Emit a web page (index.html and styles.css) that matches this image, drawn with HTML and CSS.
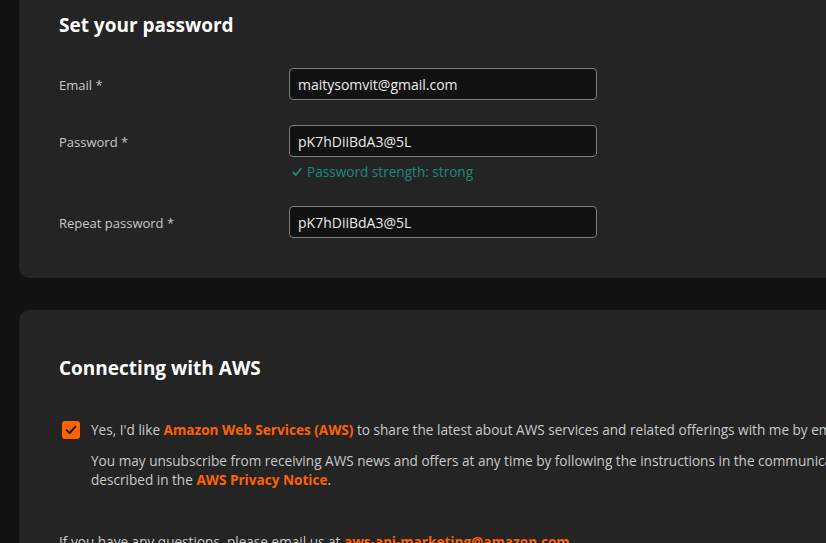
FILE: index.html
```html
<!DOCTYPE html>
<html lang="en">
<head>
<meta charset="utf-8">
<title>Set your password</title>
<link rel="stylesheet" href="styles.css">
</head>
<body>
<main class="page">
  <section class="card card-password">
    <h2 class="card-title">Set your password</h2>
    <div class="form-row">
      <label class="field-label" for="email">Email *</label>
      <div class="field">
        <input class="input" id="email" type="text" value="maitysomvit@gmail.com">
      </div>
    </div>
    <div class="form-row">
      <label class="field-label" for="pw">Password *</label>
      <div class="field">
        <input class="input" id="pw" type="text" value="pK7hDiiBdA3@5L">
        <div class="strength"><svg class="check" width="10" height="10" viewBox="0 0 10 10"><path d="M1.2 5.4 L3.8 8 L8.8 1.8" fill="none" stroke="currentColor" stroke-width="1.8" stroke-linecap="round" stroke-linejoin="round"/></svg><span>Password strength: strong</span></div>
      </div>
    </div>
    <div class="form-row">
      <label class="field-label" for="pw2">Repeat password *</label>
      <div class="field">
        <input class="input" id="pw2" type="text" value="pK7hDiiBdA3@5L">
      </div>
    </div>
  </section>

  <section class="card card-aws">
    <h2 class="card-title">Connecting with AWS</h2>
    <div class="consent">
      <span class="checkbox"><svg width="18" height="18" viewBox="0 0 18 18"><path d="M4.6 9.2 L7.6 12.2 L13.4 5.6" fill="none" stroke="#111" stroke-width="1.9" stroke-linecap="round" stroke-linejoin="round"/></svg></span>
      <div class="consent-text">
        <p class="consent-main">Yes, I'd like <a class="link">Amazon Web Services (AWS)</a> to share the latest about AWS services and related offerings with me by email</p>
        <p class="consent-note">You may unsubscribe from receiving AWS news and offers at any time by following the instructions in the communications received, as<br>described in the <a class="link">AWS Privacy Notice</a>.</p>
      </div>
    </div>
    <p class="contact">If you have any questions, please email us at <a class="link">aws-api-marketing@amazon.com</a></p>
  </section>
</main>
</body>
</html>
```

FILE: styles.css
```css
html, body {
  margin: 0;
  padding: 0;
  background: #121212;
  overflow: hidden;
  width: 826px;
  height: 543px;
}

body {
  font-family: "Open Sans", "Noto Sans", sans-serif;
  color: #c9c9c9;
}

.page {
  padding-left: 19px;
  width: 1100px;
  margin-top: -30px;
  display: flex;
  flex-direction: column;
  gap: 32px;
}

.card {
  background: #242424;
  border-radius: 10px;
  padding: 0 40px;
}

.card-password {
  padding-top: 40px;
  padding-bottom: 40px;
}

.card-title {
  margin: 0;
  font-size: 19px;
  font-weight: 700;
  color: #ffffff;
  line-height: 30px;
}

.card-password .card-title {
  margin-bottom: 28px;
}

.form-row {
  display: flex;
  align-items: flex-start;
  margin-bottom: 25px;
}

.form-row:last-child {
  margin-bottom: 0;
}

.field-label {
  width: 230px;
  font-size: 13px;
  line-height: 32px;
  margin-top: 1px;
  margin-bottom: -1px;
  color: #c9c9c9;
}

.field {
  display: flex;
  flex-direction: column;
}

.input {
  box-sizing: border-box;
  width: 308px;
  height: 32px;
  background: #121212;
  border: 1px solid #7d7d7d;
  border-radius: 4px;
  padding: 0 8px;
  font-family: "Open Sans", "Noto Sans", sans-serif;
  font-size: 14px;
  color: #ececec;
  outline: none;
}

.strength {
  display: flex;
  align-items: center;
  gap: 5px;
  margin-top: 6px;
  margin-bottom: 1px;
  padding-left: 3px;
  font-size: 13.6px;
  line-height: 17px;
  color: #1e8a76;
}

.card-aws {
  padding-top: 43px;
  padding-bottom: 40px;
}

.card-aws .card-title {
  margin-bottom: 37px;
}

.consent {
  display: flex;
  align-items: flex-start;
  gap: 11px;
  padding-left: 3px;
}

.checkbox {
  flex: none;
  width: 18px;
  height: 18px;
  border-radius: 3px;
  background: #ff6200;
  display: flex;
  margin-top: 1px;
}

.consent-text p {
  margin: 0;
  font-size: 13.6px;
  white-space: nowrap;
}

.consent-main {
  line-height: 20px;
  margin-bottom: 11px !important;
}

.consent-note {
  line-height: 19px;
}

.contact {
  margin: 43px 0 0;
  font-size: 13.6px;
  line-height: 19px;
  white-space: nowrap;
}

.link {
  color: #ff6200;
  font-weight: 700;
  text-decoration: none;
}
```
